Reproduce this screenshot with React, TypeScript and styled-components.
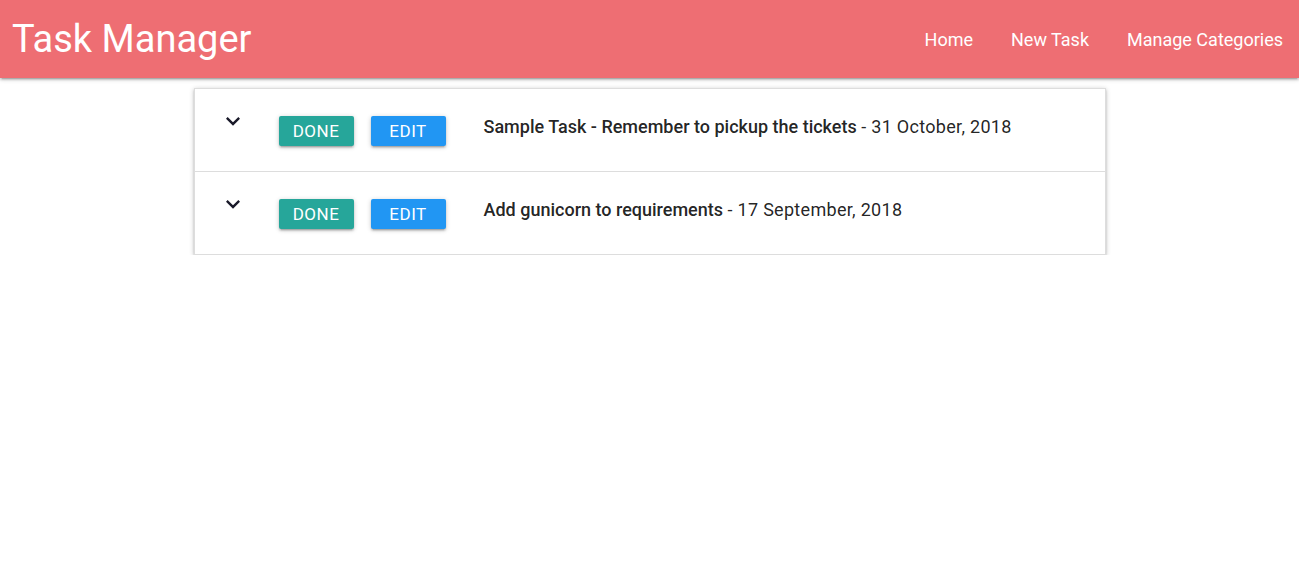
import React from "react";
import styled, { createGlobalStyle } from "styled-components";

const Global = createGlobalStyle`
  html, body { margin: 0; padding: 0; background: #fff; }
  body { font-family: Roboto, "Noto Sans", sans-serif; color: rgba(0,0,0,0.87); }
  * { box-sizing: border-box; }
`;

const Nav = styled.nav`
  height: 78px;
  background: #ee6e73;
  color: #fff;
  display: flex;
  align-items: center;
  justify-content: space-between;
  padding: 0 0 0 12px;
  box-shadow: 0 2px 2px 0 rgba(0,0,0,0.14), 0 3px 1px -2px rgba(0,0,0,0.12), 0 1px 5px 0 rgba(0,0,0,0.2);
  position: relative;
  z-index: 1;
`;

const Brand = styled.a`
  font-size: 38px;
  color: #fff;
  text-decoration: none;
  line-height: 1;
  margin-top: -1px;
`;

const Links = styled.ul`
  display: flex;
  list-style: none;
  margin: 0;
  padding: 0;
`;

const LinkItem = styled.li`
  a {
    display: block;
    padding: 0 16px 0 22px;
    color: #fff;
    text-decoration: none;
    font-size: 18px;
  }
`;

const Collapsible = styled.ul`
  width: 912px;
  margin: 10px auto 0;
  padding: 0;
  list-style: none;
  border: 1px solid #ddd;
  border-bottom: none;
  box-shadow: 0 2px 2px 0 rgba(0,0,0,0.16), 0 3px 1px -2px rgba(0,0,0,0.14), 0 1px 5px 0 rgba(0,0,0,0.22);
`;

const Header = styled.li`
  display: flex;
  align-items: flex-start;
  height: 83px;
  padding: 18px 0 0 24px;
  border-bottom: 1px solid #ddd;
  background: #fff;
`;

const Chevron = styled.svg`
  width: 28px;
  height: 28px;
  flex: none;
  margin-right: 32px;
`;

const Btn = styled.button<{ $bg: string }>`
  height: 30px;
  width: 75px;
  margin-top: 9px;
  margin-right: 17px;
  border: none;
  border-radius: 2px;
  background: ${(p) => p.$bg};
  color: #fff;
  font-family: Roboto, sans-serif;
  font-size: 17px;
  letter-spacing: 0.5px;
  text-transform: uppercase;
  padding: 0;
  box-shadow: 0 2px 2px 0 rgba(0,0,0,0.14), 0 3px 1px -2px rgba(0,0,0,0.12), 0 1px 5px 0 rgba(0,0,0,0.2);
`;

const Text = styled.div`
  margin-left: 21px;
  margin-top: 8px;
  font-size: 18px;
  line-height: 24px;
  color: rgba(0,0,0,0.87);
  b { font-weight: 500; }
`;

const DateText = styled.span`
  letter-spacing: 0.3px;
`;

const tasks = [
  { title: "Sample Task - Remember to pickup the tickets", date: "31 October, 2018" },
  { title: "Add gunicorn to requirements", date: "17 September, 2018" },
];

export default function App() {
  return (
    <>
      <Global />
      <Nav>
        <Brand href="#">Task Manager</Brand>
        <Links>
          <LinkItem><a href="#">Home</a></LinkItem>
          <LinkItem><a href="#">New Task</a></LinkItem>
          <LinkItem><a href="#">Manage Categories</a></LinkItem>
        </Links>
      </Nav>
      <Collapsible>
        {tasks.map((t) => (
          <Header key={t.title}>
            <Chevron viewBox="0 0 24 24">
              <path d="M7.41 8.59L12 13.17l4.59-4.58L18 10l-6 6-6-6 1.41-1.41z" fill="#1a1a2a" />
            </Chevron>
            <Btn $bg="#26a69a">Done</Btn>
            <Btn $bg="#2196f3">Edit</Btn>
            <Text>
              <b>{t.title}</b> <DateText>- {t.date}</DateText>
            </Text>
          </Header>
        ))}
      </Collapsible>
    </>
  );
}
